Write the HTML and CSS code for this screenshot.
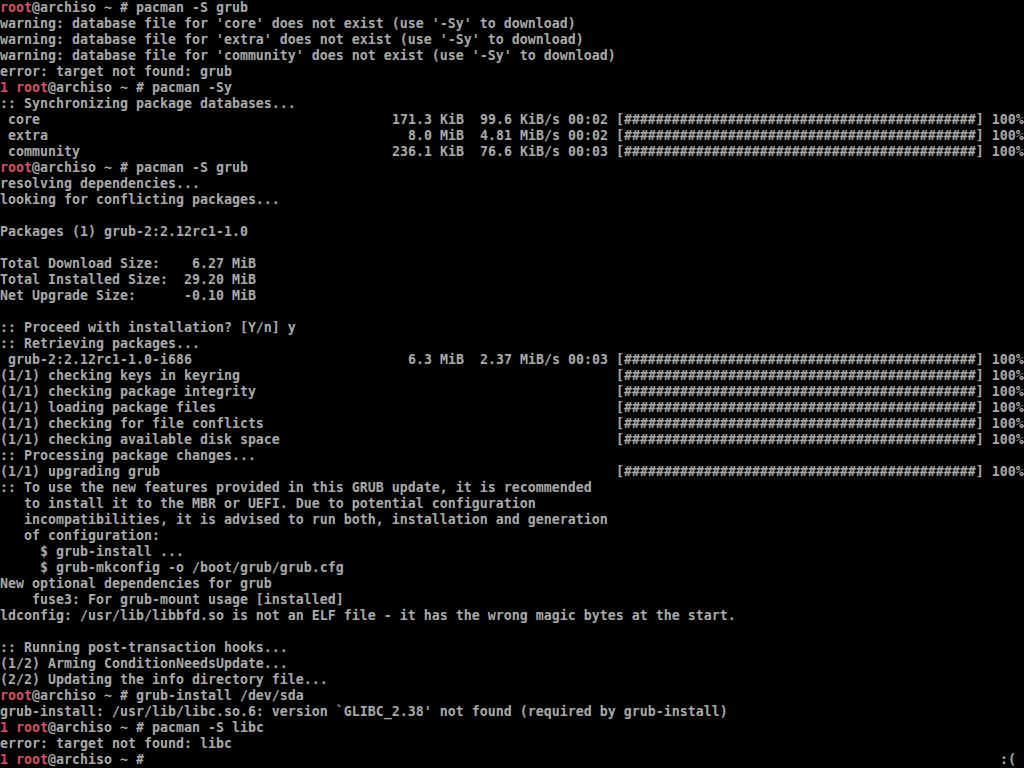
FILE: index.html
```html
<!DOCTYPE html>
<html lang="en">
  <head>
    <meta charset="UTF-8" />
    <meta name="viewport" content="width=device-width, initial-scale=1.0" />
    <title>tty1</title>
    <link rel="stylesheet" href="styles.css">
  </head>
  <body>
    <main class="konsol">
<pre class="tty"><span class="rod">root</span>@archiso ~ # pacman -S grub
warning: database file for 'core' does not exist (use '-Sy' to download)
warning: database file for 'extra' does not exist (use '-Sy' to download)
warning: database file for 'community' does not exist (use '-Sy' to download)
error: target not found: grub
<span class="rod">1 root</span>@archiso ~ # pacman -Sy
:: Synchronizing package databases...
<span class="navn"> core</span>171.3 KiB  99.6 KiB/s 00:02 [###########################################<span>#</span>] 100%
<span class="navn"> extra</span>  8.0 MiB  4.81 MiB/s 00:02 [###########################################<span>#</span>] 100%
<span class="navn"> community</span>236.1 KiB  76.6 KiB/s 00:03 [###########################################<span>#</span>] 100%
<span class="rod">root</span>@archiso ~ # pacman -S grub
resolving dependencies...
looking for conflicting packages...

Packages (1) grub-2:2.12rc1-1.0

Total Download Size:    6.27 MiB
Total Installed Size:  29.20 MiB
Net Upgrade Size:      -0.10 MiB

:: Proceed with installation? [Y/n] y
:: Retrieving packages...
<span class="navn"> grub-2:2.12rc1-1.0-i686</span>  6.3 MiB  2.37 MiB/s 00:03 [###########################################<span>#</span>] 100%
<span class="trin">(1/1) checking keys in keyring</span>[###########################################<span>#</span>] 100%
<span class="trin">(1/1) checking package integrity</span>[###########################################<span>#</span>] 100%
<span class="trin">(1/1) loading package files</span>[###########################################<span>#</span>] 100%
<span class="trin">(1/1) checking for file conflicts</span>[###########################################<span>#</span>] 100%
<span class="trin">(1/1) checking available disk space</span>[###########################################<span>#</span>] 100%
:: Processing package changes...
<span class="trin">(1/1) upgrading grub</span>[###########################################<span>#</span>] 100%
:: To use the new features provided in this GRUB update, it is recommended
   to install it to the MBR or UEFI. Due to potential configuration
   incompatibilities, it is advised to run both, installation and generation
   of configuration:
     $ grub-install ...
     $ grub-mkconfig -o /boot/grub/grub.cfg
New optional dependencies for grub
    fuse3: For grub-mount usage [installed]
ldconfig: /usr/lib/libbfd.so is not an ELF file - it has the wrong magic bytes at the start.

:: Running post-transaction hooks...
(1/2) Arming ConditionNeedsUpdate...
(2/2) Updating the info directory file...
<span class="rod">root</span>@archiso ~ # grub-install /dev/sda
grub-install: /usr/lib/libc.so.6: version `GLIBC_2.38' not found (required by grub-install)
<span class="rod">1 root</span>@archiso ~ # pacman -S libc
error: target not found: libc
<span class="sidste"><span class="rod">1 root</span>@archiso ~ # </span>:(</pre>
    </main>
  </body>
</html>
```

FILE: styles.css
```css
* {
  box-sizing: border-box;
  margin: 0;
  padding: 0;
}

html,
body {
  background-color: #000;
  width: 1024px;
  height: 768px;
  overflow: hidden;
}

.tty {
  font-family: "DejaVu Sans Mono", "Liberation Mono", monospace;
  font-size: 13.29px;
  font-weight: bold;
  line-height: 16px;
  color: #aaaaaa;
  white-space: pre;
  overflow: hidden;
  width: 1024px;
  height: 768px;
}

.rod {
  color: #dc4f5d;
}

/* kolonner: 49 tegn og 77 tegn a 8px */
.navn {
  display: inline-block;
  width: 392px;
}

.trin {
  display: inline-block;
  width: 616px;
}

.sidste {
  display: inline-block;
  width: 1000px;
}
```
